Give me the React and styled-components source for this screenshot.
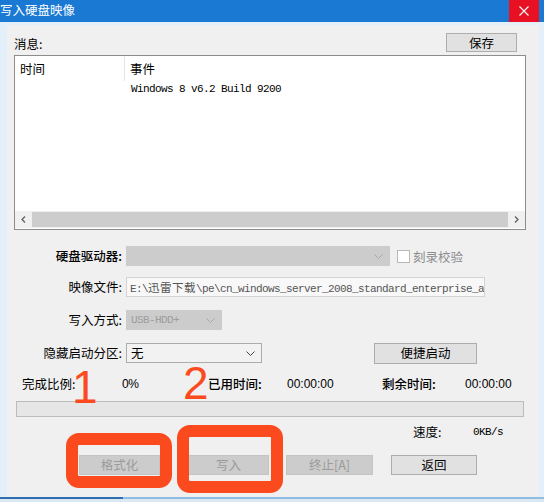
import React from "react";
import styled, { createGlobalStyle } from "styled-components";

const Global = createGlobalStyle`
  html, body { margin: 0; padding: 0; }
  body { width: 544px; height: 502px; overflow: hidden; background: #e3eff9; }
  * { box-sizing: border-box; }
`;

const UI = `"Noto Sans CJK SC", "Liberation Sans", sans-serif`;
const MONO = `"Liberation Mono", "Noto Sans CJK SC", monospace`;

const Page = styled.div`
  position: relative;
  width: 544px;
  height: 502px;
  display: flex;
  flex-direction: column;
  background: #e3eff9;
  font-family: ${UI};
  font-size: 12px;
  color: #000;
`;

const TitleBar = styled.div`
  height: 22px;
  flex: none;
  display: flex;
  align-items: center;
  background: #1979d3;
  padding-right: 5px;
`;

const Title = styled.div`
  flex: 1;
  color: #fff;
  font-size: 12.5px;
  line-height: 22px;
  margin-top: -2px;
`;

const Close = styled.div`
  width: 30px;
  height: 22px;
  background: #e81123;
  display: flex;
  align-items: center;
  justify-content: center;
`;

const Frame = styled.div`
  flex: none;
  padding: 3px 5px 0 7px;
`;

const Body = styled.div`
  height: 472px;
  background: #f0f0f0;
  padding: 0 13px 0 7px;
  display: flex;
  flex-direction: column;
`;

const HeadRow = styled.div`
  margin-top: 8px;
  height: 19px;
  display: flex;
  align-items: flex-end;
  justify-content: space-between;
  padding-right: 9px;
`;

const Caption = styled.span`
  line-height: 14px;
  margin-bottom: 1px;
  font-size: 12.5px;
`;

const Button = styled.div`
  width: ${(p) => p.$w}px;
  height: ${(p) => p.$h || 20}px;
  margin-left: ${(p) => p.$ml || 0}px;
  flex: none;
  display: flex;
  align-items: center;
  justify-content: center;
  background: ${(p) => (p.$disabled ? "#cccccc" : "#e1e1e1")};
  border: 1px solid ${(p) => (p.$disabled ? "#c4c4c4" : "#adadad")};
  color: ${(p) => (p.$disabled ? "#9b9b9b" : "#000")};
  font-size: 12.5px;
  line-height: 14px;
`;

const ListBox = styled.div`
  margin-top: 3px;
  height: 175px;
  border: 1px solid #8c8c8c;
  background: #fff;
  display: flex;
  flex-direction: column;
`;

const ListHeader = styled.div`
  height: 25px;
  display: grid;
  grid-template-columns: 110px 1fr;
`;

const HeaderCell = styled.div`
  padding-left: ${(p) => p.$pl}px;
  display: flex;
  align-items: center;
  border-right: ${(p) => (p.$divider ? "1px solid #e5e5e5" : "none")};
  font-size: 12.5px;
`;

const ListRow = styled.div`
  height: 16px;
  display: grid;
  grid-template-columns: 116px 1fr;
  align-items: center;
`;

const Mono = styled.span`
  font-family: ${MONO};
  font-size: 11px;
  letter-spacing: -0.6px;
  color: ${(p) => p.$color || "#000"};
  white-space: nowrap;
`;

const Wide = styled.span`
  font-family: "Noto Sans CJK SC", sans-serif;
  font-size: 11.5px;
  letter-spacing: 0.5px;
`;

const ListFill = styled.div`
  flex: 1;
`;

const HScroll = styled.div`
  height: 17px;
  margin-bottom: 1px;
  display: flex;
  align-items: center;
  background: #f0f0f0;
`;

const Arrow = styled.div`
  width: 17px;
  height: 17px;
  display: flex;
  align-items: center;
  justify-content: center;
  flex: none;
`;

const Thumb = styled.div`
  flex: 1;
  height: 15px;
  background: #cdcdcd;
`;

const Form = styled.div`
  margin-top: 16px;
  display: flex;
  flex-direction: column;
`;

const FormRow = styled.div`
  margin-top: ${(p) => p.$mt || 0}px;
  height: 20px;
  display: flex;
  align-items: center;
`;

const Label = styled.div`
  width: 108px;
  margin-right: 4px;
  text-align: right;
  font-size: 12.5px;
  font-weight: ${(p) => (p.$bold ? 500 : 400)};
  line-height: 20px;
  flex: none;
`;

const Combo = styled.div`
  width: ${(p) => p.$w}px;
  height: 20px;
  flex: none;
  display: flex;
  align-items: center;
  justify-content: space-between;
  padding: 0 6px 0 4px;
  background: ${(p) => (p.$disabled ? "#cccccc" : "#f2f2f2")};
  border: 1px solid ${(p) => (p.$disabled ? "#cccccc" : "#acacac")};
  overflow: hidden;
`;

const ComboText = styled.span`
  font-size: 12.5px;
  line-height: 18px;
`;

const Check = styled.div`
  margin-left: 7px;
  width: 13px;
  height: 13px;
  border: 1px solid #b8b8b8;
  background: #fff;
  flex: none;
`;

const CheckLabel = styled.span`
  margin-left: 3px;
  color: #8d8d8d;
  font-size: 12.5px;
`;

const Field = styled.div`
  width: 359px;
  height: 20px;
  flex: none;
  display: flex;
  align-items: center;
  padding-left: 3px;
  background: #f8f8f8;
  border: 1px solid #d3d3d3;
  overflow: hidden;
`;

const Spacer = styled.div`
  width: ${(p) => p.$w}px;
  flex: none;
`;

const StatusRow = styled.div`
  margin-top: 13px;
  height: 16px;
  padding-left: 8px;
  display: grid;
  grid-template-columns: 100px 86px 79px 95px 83px auto;
  align-items: center;
`;

const StatusLabel = styled.span`
  font-size: 12.5px;
  line-height: 16px;
  font-weight: ${(p) => (p.$bold ? 500 : 400)};
`;

const Num = styled.span`
  font-family: "Liberation Sans", sans-serif;
  font-size: 12px;
  letter-spacing: ${(p) => p.$ls || 0}px;
  line-height: 16px;
`;

const Progress = styled.div`
  margin: 9px 2px 0 2px;
  height: 16px;
  background: #e6e6e6;
  border: 1px solid #bcbcbc;
`;

const SpeedRow = styled.div`
  margin-top: 7px;
  height: 16px;
  display: grid;
  grid-template-columns: 399px 60px auto;
  align-items: center;
`;

const ButtonRow = styled.div`
  margin-top: 15px;
  display: flex;
  padding-left: 65px;
`;

const BottomEdge = styled.div`
  flex: none;
  height: 5px;
  display: flex;
  align-items: flex-start;
  background: #dbe8f4;
`;

const EdgeLine = styled.div`
  height: 2px;
  width: ${(p) => (p.$w ? `${p.$w}px` : "auto")};
  flex: ${(p) => (p.$w ? "none" : 1)};
  background: ${(p) => p.$c};
`;

const Mark = styled.div`
  position: absolute;
  left: ${(p) => p.$x}px;
  top: ${(p) => p.$y}px;
  width: ${(p) => p.$w}px;
  height: ${(p) => p.$h}px;
  border: 12px solid #fc4a1f;
  border-radius: 13px;
`;

const Digit = styled.div`
  position: absolute;
  left: ${(p) => p.$x}px;
  top: ${(p) => p.$y}px;
  font-family: "Liberation Sans", sans-serif;
  font-size: 46px;
  line-height: 46px;
  color: #fc4a1f;
`;

const Chevron = ({ color = "#555" }) => (
  <svg width="9" height="5" viewBox="0 0 9 5">
    <path d="M0.5 0.5 L4.5 4.5 L8.5 0.5" fill="none" stroke={color} strokeWidth="1" />
  </svg>
);

export default function App() {
  return (
    <>
      <Global />
      <Page>
        <TitleBar>
          <Title>写入硬盘映像</Title>
          <Close>
            <svg width="10" height="10" viewBox="0 0 10 10">
              <path d="M0.5 0.5 L9.5 9.5 M9.5 0.5 L0.5 9.5" stroke="#fff" strokeWidth="1.1" />
            </svg>
          </Close>
        </TitleBar>
        <Frame>
          <Body>
            <HeadRow>
              <Caption>消息:</Caption>
              <Button $w={71} $h={19}>保存</Button>
            </HeadRow>
            <ListBox>
              <ListHeader>
                <HeaderCell $pl={5} $divider>时间</HeaderCell>
                <HeaderCell $pl={5}>事件</HeaderCell>
              </ListHeader>
              <ListRow>
                <span />
                <Mono>Windows 8 v6.2 Build 9200</Mono>
              </ListRow>
              <ListFill />
              <HScroll>
                <Arrow>
                  <svg width="5" height="7" viewBox="0 0 5 7">
                    <path d="M4 0.5 L1 3.5 L4 6.5" fill="none" stroke="#606060" strokeWidth="1.3" />
                  </svg>
                </Arrow>
                <Thumb />
                <Arrow>
                  <svg width="5" height="7" viewBox="0 0 5 7">
                    <path d="M1 0.5 L4 3.5 L1 6.5" fill="none" stroke="#606060" strokeWidth="1.3" />
                  </svg>
                </Arrow>
              </HScroll>
            </ListBox>

            <Form>
              <FormRow>
                <Label $bold>硬盘驱动器:</Label>
                <Combo $w={264} $disabled>
                  <span />
                  <Chevron color="#a8a8a8" />
                </Combo>
                <Check />
                <CheckLabel>刻录校验</CheckLabel>
              </FormRow>
              <FormRow $mt={11}>
                <Label>映像文件:</Label>
                <Field>
                  <Mono $color="#555">
                    E:\<Wide>迅雷下载</Wide>\pe\cn_windows_server_2008_standard_enterprise_a
                  </Mono>
                </Field>
              </FormRow>
              <FormRow $mt={13}>
                <Label>写入方式:</Label>
                <Combo $w={96} $disabled>
                  <Mono $color="#9d9d9d">USB-HDD+</Mono>
                  <Chevron color="#a8a8a8" />
                </Combo>
              </FormRow>
              <FormRow $mt={13}>
                <Label>隐藏启动分区:</Label>
                <Combo $w={136}>
                  <ComboText>无</ComboText>
                  <Chevron color="#444" />
                </Combo>
                <Spacer $w={112} />
                <Button $w={103} $h={21}>便捷启动</Button>
              </FormRow>
            </Form>

            <StatusRow>
              <StatusLabel>完成比例:</StatusLabel>
              <Num $ls={-0.5}>0%</Num>
              <StatusLabel $bold>已用时间:</StatusLabel>
              <Num>00:00:00</Num>
              <StatusLabel $bold>剩余时间:</StatusLabel>
              <Num>00:00:00</Num>
            </StatusRow>

            <Progress />

            <SpeedRow>
              <span />
              <StatusLabel>速度:</StatusLabel>
              <Mono>0KB/s</Mono>
            </SpeedRow>

            <ButtonRow>
              <Button $w={81} $disabled>格式化</Button>
              <Button $w={81} $ml={28} $disabled>写入</Button>
              <Button $w={87} $ml={17} $disabled>终止[A]</Button>
              <Button $w={86} $ml={18}>返回</Button>
            </ButtonRow>
          </Body>
        </Frame>
        <BottomEdge>
          <EdgeLine $w={123} $c="#2f6eae" />
          <EdgeLine $c="#8fbde3" />
        </BottomEdge>

        <Digit $x={72} $y={364}>1</Digit>
        <Digit $x={183} $y={360}>2</Digit>
        <Mark $x={66} $y={433} $w={106} $h={55} />
        <Mark $x={177} $y={425} $w={106} $h={68} />
      </Page>
    </>
  );
}
